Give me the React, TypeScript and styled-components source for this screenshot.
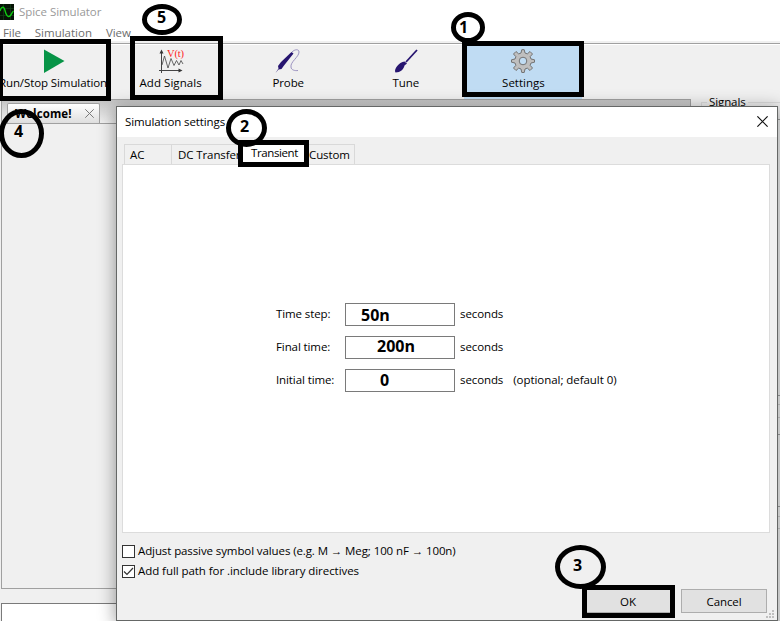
import React from "react";
import styled, { createGlobalStyle } from "styled-components";

const GlobalStyle = createGlobalStyle`
  * { box-sizing: border-box; }
  body { margin: 0; overflow: hidden; }
`;

const Window = styled.div`
  position: relative;
  display: flex;
  flex-direction: column;
  width: 780px;
  height: 621px;
  overflow: hidden;
  background: #f0f0f0;
  color: #000;
  font-family: "Open Sans", "Noto Sans", sans-serif;
  font-size: 11.5px;
  line-height: 16px;
  white-space: nowrap;
  > * { flex-shrink: 0; }
`;

const Text = styled.span<{ $track?: number }>`
  letter-spacing: ${(p) => p.$track ?? -0.1}px;
`;

const TitleBar = styled.header`
  display: flex;
  align-items: center;
  gap: 5px;
  height: 24px;
  background: #fff;
  color: #999;
`;

const MenuBar = styled.nav`
  display: flex;
  gap: 14px;
  height: 17px;
  padding: 1px 0 0 3px;
  background: #fff;
  color: #6d6d6d;
`;

const Toolbar = styled.div`
  display: flex;
  height: 58px;
  margin-left: -6px;
  border-top: 1px solid #f0f0f0;
  box-shadow: inset 0 1px #f0f0f0, inset 0 2px #a0a0a0, inset 0 3px #fff;
`;

const Tool = styled.div<{ $active?: boolean }>`
  display: flex;
  flex-direction: column;
  align-items: center;
  width: 118px;
  padding-top: 6px;
  margin-right: ${(p) => (p.$active ? "0" : "-0.4px")};
  background: ${(p) => (p.$active ? "#c0dcf3" : "transparent")};
  svg { flex: none; width: 26px; height: 26px; margin-bottom: 1px; }
`;

const Workspace = styled.main`
  display: flex;
  gap: 10px;
  height: 490px;
`;

const Plots = styled.section`
  width: 690px;
  margin-left: 1px;
  border: 1px solid #a0a0a0;
`;

const PlotTabs = styled.div`
  display: flex;
  align-items: flex-end;
  height: 24px;
  padding-left: 5px;
  border-bottom: 1px solid #a0a0a0;
  background: linear-gradient(#c4c4c4, #f0f0f0);
`;

const PlotTab = styled.div`
  display: flex;
  align-items: center;
  gap: 13px;
  width: 93px;
  height: 20px;
  padding-left: 7px;
  border: 1px solid #a0a0a0;
  border-bottom: 0;
  border-radius: 2px 2px 0 0;
  background: linear-gradient(#fff, #dedede);
  font-weight: 700;
`;

const SignalColumn = styled.aside`
  flex: 1;
  padding-top: 2px;
`;

const GroupBox = styled.fieldset`
  height: 300px;
  margin: -7px -10px 0 0;
  padding: 0;
  border: 1px solid #dcdcdc;
`;

const Legend = styled.legend`
  margin-left: 5px;
  padding: 0 2px;
`;

const Console = styled.div`
  width: 690px;
  height: 30px;
  margin: 14px 0 0 1px;
  border: 1px solid #7a7a7a;
  background: #fff;
`;

const Dialog = styled.div`
  position: absolute;
  left: 116px;
  top: 106px;
  display: flex;
  flex-direction: column;
  width: 662px;
  height: 515px;
  border: 1px solid #656766;
  background: #f0f0f0;
  box-shadow: 0 3px 16px 1px rgba(0, 0, 0, 0.38);
`;

const DialogTitle = styled.div`
  display: flex;
  align-items: center;
  justify-content: space-between;
  height: 30px;
  padding: 0 9px 0 8px;
  background: #fff;
  svg { margin-bottom: 2px; }
`;

const Tabs = styled.div`
  display: flex;
  height: 20px;
  margin: 7px 0 0 7px;
`;

const Tab = styled.div<{ $width: number; $pad: number; $active?: boolean }>`
  width: ${(p) => p.$width}px;
  padding: ${(p) => (p.$active ? "0" : "2px")} 0 0 ${(p) => p.$pad}px;
  border: 1px solid #d9d9d9;
  border-width: 1px 1px 0 0;
  background: ${(p) => (p.$active ? "#fff" : "#f0f0f0")};
  overflow: hidden;
  &:first-child { border-left-width: 1px; }
`;

const Panel = styled.div`
  width: 648px;
  height: 369px;
  margin-left: 5px;
  padding: 138px 0 0 153px;
  border: 1px solid #dcdcdc;
  background: #fff;
`;

const Fields = styled.div`
  display: grid;
  grid-template-columns: 69px 110px auto auto;
  grid-auto-rows: 23px;
  row-gap: 10px;
  justify-content: start;
  line-height: 21px;
`;

const Field = styled.div<{ $indent: number; $lift: number }>`
  height: 23px;
  padding-left: ${(p) => p.$indent}px;
  border: 1px solid #7a7a7a;
  font-size: 16px;
  font-weight: 700;
  line-height: ${(p) => 23 - p.$lift * 2}px;
`;

const Unit = styled.span`
  padding-left: 5px;
`;

const Hint = styled.span`
  padding-left: 10px;
`;

const Options = styled.div`
  display: flex;
  flex-direction: column;
  gap: 4px;
  margin: 10px 0 0 5px;
`;

const Option = styled.label`
  display: flex;
  align-items: center;
  gap: 3px;
  height: 16px;
  line-height: 18px;
`;

const Box = styled.span`
  display: flex;
  width: 13px;
  height: 13px;
  border: 1px solid #333;
  background: #fff;
`;

const Buttons = styled.div`
  display: flex;
  justify-content: flex-end;
  gap: 7px;
  margin: 10px 10px 0 0;
`;

const Button = styled.button<{ $width: number }>`
  width: ${(p) => p.$width}px;
  height: 24px;
  padding: 1px 0 0;
  border: 1px solid #adadad;
  background: #e1e1e1;
  color: #000;
  font: inherit;
`;

const Grip = styled.svg`
  position: absolute;
  right: 3px;
  bottom: 2px;
`;

const MarkBox = styled.div<{ $x: number; $y: number; $w: number; $h: number }>`
  position: absolute;
  left: ${(p) => p.$x}px;
  top: ${(p) => p.$y}px;
  width: ${(p) => p.$w}px;
  height: ${(p) => p.$h}px;
  border: 5px solid #000;
`;

const MarkRing = styled(MarkBox)`
  border-radius: 50%;
`;

const MarkNumber = styled.span<{ $x: number; $y: number }>`
  position: absolute;
  left: ${(p) => p.$x}px;
  top: ${(p) => p.$y}px;
  font-size: 16px;
  font-weight: 700;
  line-height: 20px;
`;

const EdgeStrip = styled.svg`
  position: absolute;
  left: 778px;
  top: 119px;
`;

const boxes = [
  { x: -2, y: 39, w: 113, h: 62 },
  { x: 130, y: 36, w: 93, h: 64 },
  { x: 462, y: 41, w: 122, h: 56 },
  { x: 238, y: 140, w: 71, h: 27 },
  { x: 582, y: 585, w: 93, h: 33 },
];

const rings = [
  { n: 1, x: 451, y: 12, w: 34, h: 31, tx: 459, ty: 17 },
  { n: 2, x: 226, y: 109, w: 41, h: 38, tx: 240, ty: 116 },
  { n: 3, x: 555, y: 545, w: 51, h: 44, tx: 573, ty: 555 },
  { n: 4, x: -1, y: 109, w: 45, h: 49, tx: 14, ty: 121 },
  { n: 5, x: 142, y: 4, w: 40, h: 31, tx: 157, ty: 7 },
];

const fields = [
  { label: "Time step:", value: "50n", indent: 15, lift: 0 },
  { label: "Final time:", value: "200n", indent: 31, lift: 2 },
  { label: "Initial time:", value: "0", indent: 34, lift: 1, hint: "(optional; default 0)" },
];

const Cross = ({ size, color }: { size: number; color: string }) => (
  <svg width={size} height={size} viewBox="0 0 10 10" fill="none" stroke={color} strokeWidth="1.1">
    <path d="M.3.3 9.7 9.7M9.7.3.3 9.7" />
  </svg>
);

const PlayIcon = () => (
  <svg viewBox="0 0 26 26"><path d="M4 1.500 24.500 13 4 25Z" fill="#079447" /></svg>
);

const SignalsIcon = () => (
  <svg viewBox="0 0 26 26" fill="none" stroke="#444" strokeWidth="1">
    <path d="M3.500 25V3M1 22.500H22" />
    <path d="m1.500 5.500 2-4 2 4ZM20.500 20.500l4 2-4 2Z" fill="#333" stroke="none" />
    <path d="M4 17 6.500 8 10 20 13 10.500 16 17.500 18.500 12.500 21 17 23 12.500 25 16" strokeWidth=".8" />
    <text x="9" y="8.500" fill="#f22" stroke="none" fontFamily="Liberation Serif, serif" fontSize="10.500" fontWeight="400" textLength="17">V(t)</text>
  </svg>
);

const ProbeIcon = () => (
  <svg viewBox="0 0 26 26">
    <path d="m.5 25 3-4.500-.5-2.500 3-4L16.500 4l2 1.500-9.500 12-2.500 3.500-3 .5Z" fill="#271570" />
    <path d="M17 4c3-3 7-3 7 0 0 5-9 10-8 15 0 3 4 4 7 3.500" fill="none" stroke="#9187ba" strokeWidth=".9" />
  </svg>
);

const TuneIcon = () => (
  <svg viewBox="0 0 26 26">
    <path d="m13 14 11-12" stroke="#271570" strokeWidth="1.800" />
    <path d="m9.500 14 2-.5 2.500 2-2.500 2c-1 4-4 7-9 7-1.500-2 1-8 7-10.500Z" fill="#271570" />
  </svg>
);

const GearIcon = () => (
  <svg viewBox="-13 -13 26 26" fill="#bfbfbf" stroke="#737373" strokeWidth="1">
    <path fillRule="evenodd" d="M-2-8-1.200-11.300H1.200L2-8 4.300-7.100 7-9.500 9.500-7 7.100-4.300 8-2 11.500-1.200V1.200L8 2 7.100 4.300 9.500 7 7 9.500 4.300 7.100 2 8 1.200 11.500H-1.200L-2 8-4.300 7.100-7 9.500-9.500 7-7.100 4.300-8 2-11.500 1.200V-1.200L-8-2-7.100-4.300-9.500-7-7-9.500-4.300-7.100ZM0-3.800A3.800 3.800 0 1 0 0 3.800 3.800 3.800 0 0 0 0-3.800Z" />
  </svg>
);

export default function App() {
  return (
    <Window>
      <GlobalStyle />
      <TitleBar>
        <svg width="14" height="16" viewBox="0 0 14 16">
          <path d="M-1 0H14V16H-1Z" fill="#061306" />
          <path d="M3.500 0V16M10.500 0V16M0 4.500H14M0 11.500H14" stroke="#15401a" strokeWidth=".7" />
          <path d="M0 7C1.500 2 4 2 5 6.500S8 14 10 12s2-4 3.500-5" fill="none" stroke="#10d010" strokeWidth="1.300" />
        </svg>
        <Text $track={-0.05}>Spice Simulator</Text>
      </TitleBar>
      <MenuBar>
        <Text>File</Text>
        <Text $track={0}>Simulation</Text>
        <Text>View</Text>
      </MenuBar>
      <Toolbar>
        <Tool><PlayIcon /><Text>Run/Stop Simulation</Text></Tool>
        <Tool><SignalsIcon /><Text $track={0.05}>Add Signals</Text></Tool>
        <Tool><ProbeIcon /><Text>Probe</Text></Tool>
        <Tool><TuneIcon /><Text>Tune</Text></Tool>
        <Tool $active><GearIcon /><Text $track={0}>Settings</Text></Tool>
      </Toolbar>
      <Workspace>
        <Plots>
          <PlotTabs>
            <PlotTab><Text $track={0.1}>Welcome!</Text><Cross size={9} color="#777" /></PlotTab>
          </PlotTabs>
        </Plots>
        <SignalColumn>
          <GroupBox><Legend><Text>Signals</Text></Legend></GroupBox>
        </SignalColumn>
      </Workspace>
      <Console />
      <Dialog>
        <DialogTitle><Text>Simulation settings</Text><Cross size={11} color="#111" /></DialogTitle>
        <Tabs>
          <Tab $width={48} $pad={5}><Text>AC</Text></Tab>
          <Tab $width={68} $pad={6}><Text>DC Transfer</Text></Tab>
          <Tab $width={68} $pad={11} $active><Text $track={-0.4}>Transient</Text></Tab>
          <Tab $width={47} $pad={1}><Text>Custom</Text></Tab>
        </Tabs>
        <Panel>
          <Fields>
            {fields.map((f) => (
              <React.Fragment key={f.label}>
                <Text>{f.label}</Text>
                <Field $indent={f.indent} $lift={f.lift}>{f.value}</Field>
                <Unit><Text>seconds</Text></Unit>
                <Hint><Text $track={-0.05}>{f.hint}</Text></Hint>
              </React.Fragment>
            ))}
          </Fields>
        </Panel>
        <Options>
          <Option><Box /><Text>Adjust passive symbol values (e.g. M → Meg; 100 nF → 100n)</Text></Option>
          <Option>
            <Box>
              <svg width="11" height="11" viewBox="0 0 11 11" fill="none" stroke="#333" strokeWidth="1.200"><path d="m1 5.500 3 3 6-6.500" /></svg>
            </Box>
            <Text $track={-0.06}>Add full path for .include library directives</Text>
          </Option>
        </Options>
        <Buttons>
          <Button $width={92}><Text>OK</Text></Button>
          <Button $width={86}><Text>Cancel</Text></Button>
        </Buttons>
        <Grip width="8" height="8" fill="#bfbfbf">
          <path d="M6 0h2v2H6ZM3 3h2v2H3ZM6 3h2v2H6ZM0 6h2v2H0ZM3 6h2v2H3ZM6 6h2v2H6Z" />
        </Grip>
      </Dialog>
      <EdgeStrip width="2" height="502">
        <rect width="2" height="502" fill="#c6c7c7" />
        <path d="M0 .5H2M0 276.500H2M0 315.500H2M0 387.500H2" stroke="#858686" />
        <path d="M0 285.500H2M0 298.500H2M0 397.500H2M0 409.500H2" stroke="#aaa" />
      </EdgeStrip>
      {boxes.map((b) => <MarkBox key={b.x} $x={b.x} $y={b.y} $w={b.w} $h={b.h} />)}
      {rings.map((r) => (
        <React.Fragment key={r.n}>
          <MarkRing $x={r.x} $y={r.y} $w={r.w} $h={r.h} />
          <MarkNumber $x={r.tx} $y={r.ty}>{r.n}</MarkNumber>
        </React.Fragment>
      ))}
    </Window>
  );
}
